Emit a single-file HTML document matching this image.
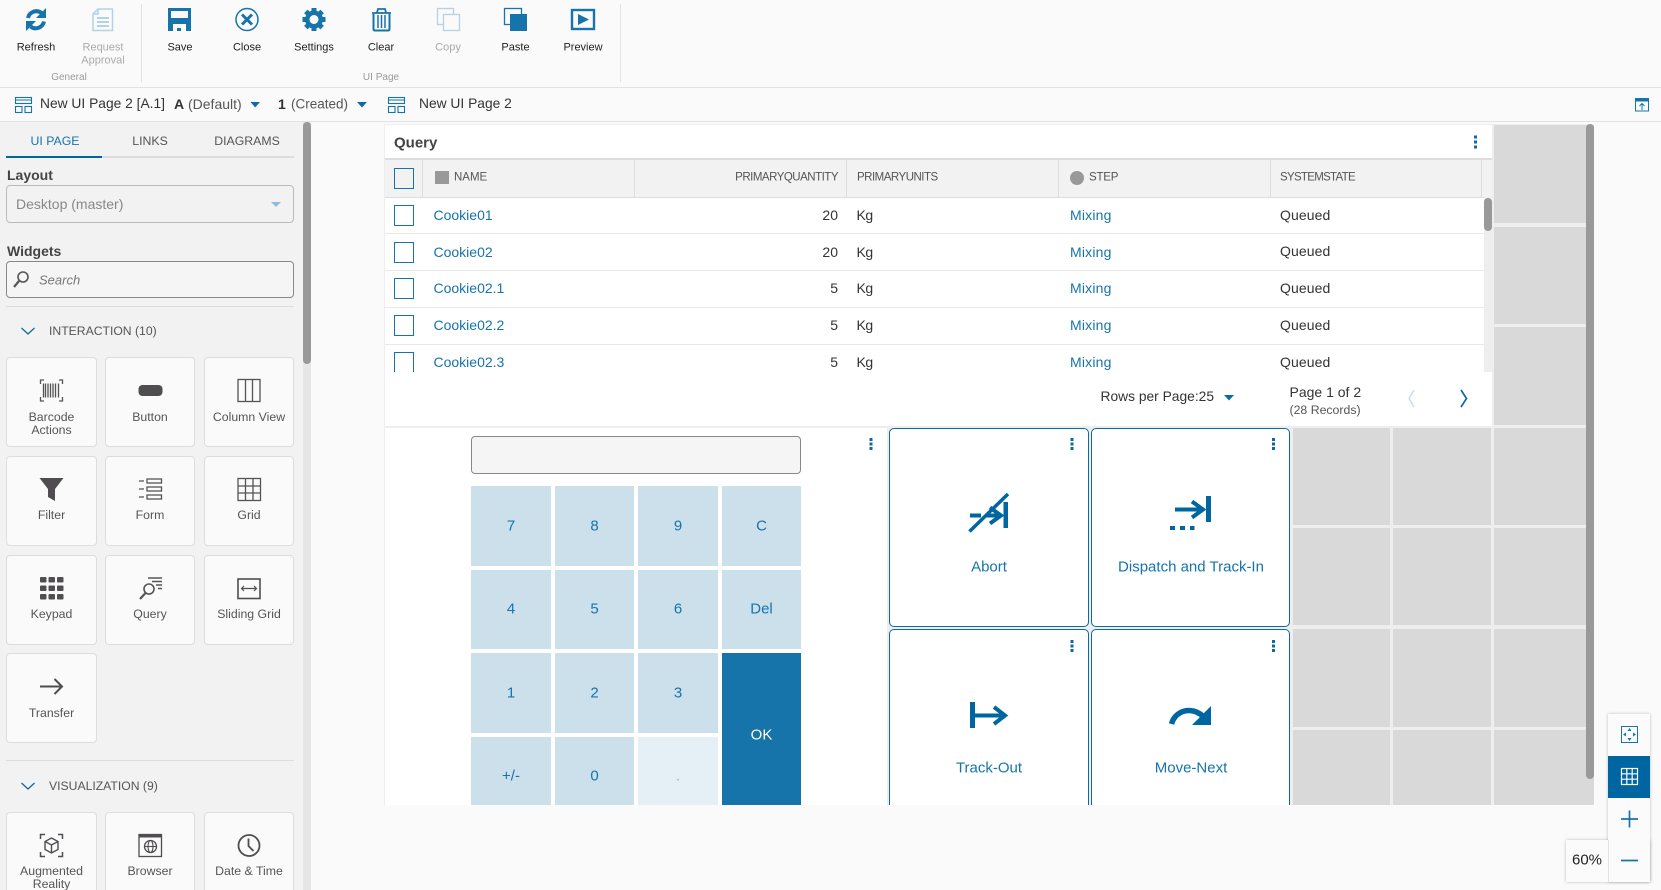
<!DOCTYPE html>
<html><head><meta charset="utf-8"><title>UI Page</title>
<style>
html,body{margin:0;padding:0;width:1661px;height:890px;overflow:hidden;background:#fafafa;font-family:"Liberation Sans",sans-serif;color:#333}
#root{position:absolute;left:0;top:0;width:1661px;height:890px;overflow:hidden;background:#fafafa}
.b{position:absolute}
.t{position:absolute;white-space:nowrap;line-height:1;transform:translateY(-50%)}
.c{position:absolute;white-space:nowrap;line-height:1;transform:translate(-50%,-50%);text-align:center}
.r{position:absolute;white-space:nowrap;line-height:1;transform:translate(-100%,-50%)}
.tb{font-size:11px;color:#222}
.dis{color:#aaa}
.sec{font-size:10px;color:#999}
.card{position:absolute;background:#fafafa;border:1px solid #ddd;border-radius:4px;box-sizing:border-box;width:91px;height:90px}
.lb{font-size:12.3px;color:#555}
.lnk{font-size:14px;color:#1674ab}
.dk{font-size:14px;color:#333}
.th{font-size:11.5px;letter-spacing:-.5px;color:#555}
.cell{position:absolute;background:#d9d9d9}
.key{position:absolute;background:#cce0eb}
.kt{font-size:15px;color:#1674ab}
.cb{position:absolute;left:394px;width:20px;height:21px;border:1.5px solid #1674ab;box-sizing:border-box;background:#fff}
.ln{position:absolute;left:385px;width:1099px;height:1px;background:#e8e8e8}
.act{position:absolute;background:#fff;border:1.3px solid #1068a0;border-radius:5px;box-sizing:border-box}
.al{font-size:15px;color:#1674ab}
.tab{font-size:12.3px}
</style></head>
<body>
<div id="root">
<!-- toolbar -->
<div class="b" style="left:0;top:87px;width:1661px;height:1px;background:#e2e2e2"></div>
<div class="b" style="left:0;top:121px;width:1661px;height:1px;background:#e2e2e2"></div>
<div class="b" style="left:141px;top:4px;width:1px;height:78px;background:#e2e2e2"></div>
<div class="b" style="left:620px;top:4px;width:1px;height:78px;background:#e2e2e2"></div>
<span class="c tb" style="left:36px;top:48px">Refresh</span>
<span class="c tb dis" style="left:103px;top:48px">Request</span>
<span class="c tb dis" style="left:103px;top:61px">Approval</span>
<span class="c sec" style="left:69px;top:77.500px">General</span>
<span class="c tb" style="left:180px;top:48px">Save</span>
<span class="c tb" style="left:247px;top:48px">Close</span>
<span class="c tb" style="left:314px;top:48px">Settings</span>
<span class="c tb" style="left:381px;top:48px">Clear</span>
<span class="c tb dis" style="left:448px;top:48px">Copy</span>
<span class="c tb" style="left:515.500px;top:48px">Paste</span>
<span class="c tb" style="left:583px;top:48px">Preview</span>
<span class="c sec" style="left:381px;top:77.500px">UI Page</span>
<!-- breadcrumb -->
<span class="t" style="left:40px;top:104px;font-size:13.8px;color:#333">New UI Page 2 [A.1]</span>
<span class="t" style="left:174px;top:104px;font-size:14px;font-weight:bold;color:#333">A</span>
<span class="t" style="left:188px;top:104px;font-size:14px;color:#555">(Default)</span>
<span class="t" style="left:278px;top:104px;font-size:14px;font-weight:bold;color:#333">1</span>
<span class="t" style="left:291px;top:104px;font-size:13.500px;color:#555">(Created)</span>
<span class="t" style="left:419px;top:104px;font-size:13.8px;color:#333">New UI Page 2</span>
<!-- sidebar -->
<div class="b" style="left:0;top:122px;width:303px;height:768px;background:#f2f2f2"></div>
<div class="b" style="left:303px;top:122px;width:8px;height:768px;background:#e6e6e6"></div>
<div class="b" style="left:303px;top:122px;width:8px;height:242px;background:#999;border-radius:4px"></div>
<span class="c tab" style="left:55px;top:141px;color:#1674ab">UI PAGE</span>
<span class="c tab" style="left:150px;top:141px;color:#555">LINKS</span>
<span class="c tab" style="left:247px;top:141px;color:#555">DIAGRAMS</span>
<div class="b" style="left:6px;top:156px;width:288px;height:2px;background:#ddd"></div>
<div class="b" style="left:6px;top:156px;width:96px;height:2px;background:#0066a2"></div>
<span class="t" style="left:7px;top:175px;font-size:14px;font-weight:bold;color:#444">Layout</span>
<div class="b" style="left:6px;top:185px;width:288px;height:38px;border:1px solid #bbb;border-radius:4px;box-sizing:border-box"></div>
<span class="t" style="left:16px;top:204px;font-size:14px;color:#888">Desktop (master)</span>
<span class="t" style="left:7px;top:251px;font-size:14px;font-weight:bold;color:#444">Widgets</span>
<div class="b" style="left:6px;top:261px;width:288px;height:37px;border:1px solid #888;border-radius:4px;box-sizing:border-box;background:#f5f5f5"></div>
<span class="t" style="left:39px;top:280px;font-size:13px;font-style:italic;color:#777">Search</span>
<div class="b" style="left:6px;top:306px;width:288px;height:1px;background:#ddd"></div>
<span class="t" style="left:49px;top:331px;font-size:12.2px;color:#555">INTERACTION (10)</span>
<div class="b" style="left:6px;top:760px;width:288px;height:1px;background:#ddd"></div>
<span class="t" style="left:49px;top:786px;font-size:12.2px;color:#555">VISUALIZATION (9)</span>

<div class="card" style="left:6px;top:357px"></div><div class="card" style="left:105px;top:357px;width:90px"></div><div class="card" style="left:204px;top:357px;width:90px"></div>
<div class="card" style="left:6px;top:456px"></div><div class="card" style="left:105px;top:456px;width:90px"></div><div class="card" style="left:204px;top:456px;width:90px"></div>
<div class="card" style="left:6px;top:555px"></div><div class="card" style="left:105px;top:555px;width:90px"></div><div class="card" style="left:204px;top:555px;width:90px"></div>
<div class="card" style="left:6px;top:653px"></div>
<div class="card" style="left:6px;top:812px;height:78px;border-bottom:0;border-radius:4px 4px 0 0"></div><div class="card" style="left:105px;top:812px;width:90px;height:78px;border-bottom:0;border-radius:4px 4px 0 0"></div><div class="card" style="left:204px;top:812px;width:90px;height:78px;border-bottom:0;border-radius:4px 4px 0 0"></div>
<span class="c lb" style="left:51.500px;top:417px">Barcode</span><span class="c lb" style="left:51.500px;top:430px">Actions</span>
<span class="c lb" style="left:150px;top:417px">Button</span>
<span class="c lb" style="left:249px;top:417px">Column View</span>
<span class="c lb" style="left:51.500px;top:515px">Filter</span>
<span class="c lb" style="left:150px;top:515px">Form</span>
<span class="c lb" style="left:249px;top:515px">Grid</span>
<span class="c lb" style="left:51.500px;top:614px">Keypad</span>
<span class="c lb" style="left:150px;top:614px">Query</span>
<span class="c lb" style="left:249px;top:614px">Sliding Grid</span>
<span class="c lb" style="left:51.500px;top:712.500px">Transfer</span>
<span class="c lb" style="left:51.500px;top:871px">Augmented</span><span class="c lb" style="left:51.500px;top:884px">Reality</span>
<span class="c lb" style="left:150px;top:871px">Browser</span>
<span class="c lb" style="left:249px;top:871px">Date &amp; Time</span>

<!-- canvas background -->
<div class="b" style="left:384px;top:124px;width:1210px;height:681px;background:#eee"></div>
<div class="cell" style="left:1494px;top:125px;width:100px;height:98px"></div>
<div class="cell" style="left:1494px;top:227px;width:100px;height:97px"></div>
<div class="cell" style="left:1494px;top:327px;width:100px;height:98px"></div>
<div class="cell" style="left:1293px;top:428px;width:97px;height:97px"></div><div class="cell" style="left:1393px;top:428px;width:98px;height:97px"></div><div class="cell" style="left:1494px;top:428px;width:100px;height:97px"></div>
<div class="cell" style="left:1293px;top:528px;width:97px;height:97px"></div><div class="cell" style="left:1393px;top:528px;width:98px;height:97px"></div><div class="cell" style="left:1494px;top:528px;width:100px;height:97px"></div>
<div class="cell" style="left:1293px;top:629px;width:97px;height:98px"></div><div class="cell" style="left:1393px;top:629px;width:98px;height:98px"></div><div class="cell" style="left:1494px;top:629px;width:100px;height:98px"></div>
<div class="cell" style="left:1293px;top:730px;width:97px;height:75px"></div><div class="cell" style="left:1393px;top:730px;width:98px;height:75px"></div><div class="cell" style="left:1494px;top:730px;width:100px;height:75px"></div>
<div class="b" style="left:1586px;top:124px;width:8px;height:655px;background:#999;border-radius:4px"></div>

<!-- query -->
<div class="b" style="left:385px;top:125px;width:1107px;height:301px;background:#fff"></div>
<span class="t" style="left:394px;top:142.500px;font-size:15px;font-weight:bold;color:#444">Query</span>
<div class="b" style="left:385px;top:158px;width:1107px;height:40px;background:#f2f2f2;border-top:2px solid #ddd;border-bottom:1px solid #ddd;box-sizing:border-box"></div>
<div class="b" style="left:422px;top:160px;width:1px;height:37px;background:#ddd"></div>
<div class="b" style="left:634px;top:160px;width:1px;height:37px;background:#ddd"></div>
<div class="b" style="left:846px;top:160px;width:1px;height:37px;background:#ddd"></div>
<div class="b" style="left:1058px;top:160px;width:1px;height:37px;background:#ddd"></div>
<div class="b" style="left:1270px;top:160px;width:1px;height:37px;background:#ddd"></div>
<div class="b" style="left:1481px;top:160px;width:1px;height:37px;background:#ddd"></div>
<div class="cb" style="top:168px;background:#f2f2f2"></div>
<div class="b" style="left:435px;top:171px;width:14px;height:13px;background:#999"></div>
<span class="t th" style="left:454px;top:177.500px;letter-spacing:0">NAME</span>
<span class="r th" style="left:838px;top:177.500px">PRIMARYQUANTITY</span>
<span class="t th" style="left:857px;top:177.500px">PRIMARYUNITS</span>
<div class="b" style="left:1070px;top:171px;width:14px;height:14px;border-radius:50%;background:#999"></div>
<span class="t th" style="left:1089px;top:177.500px;letter-spacing:-.2px">STEP</span>
<span class="t th" style="left:1280px;top:177.500px;letter-spacing:-.7px">SYSTEMSTATE</span>
<div class="ln" style="top:233px"></div><div class="ln" style="top:270px"></div><div class="ln" style="top:307px"></div><div class="ln" style="top:344px"></div>
<div class="cb" style="top:205px"></div><div class="cb" style="top:242px"></div><div class="cb" style="top:278px"></div><div class="cb" style="top:315px"></div><div class="cb" style="top:352px;height:20px;border-bottom:0"></div>
<span class="t lnk" style="left:433.500px;top:215px">Cookie01</span><span class="r dk" style="left:838px;top:215px">20</span><span class="t dk" style="left:856.500px;top:215px;letter-spacing:-.5px">Kg</span><span class="t lnk" style="left:1070px;top:215px;letter-spacing:.2px">Mixing</span><span class="t dk" style="left:1280px;top:215px;letter-spacing:.1px">Queued</span>
<span class="t lnk" style="left:433.500px;top:252px">Cookie02</span><span class="r dk" style="left:838px;top:252px">20</span><span class="t dk" style="left:856.500px;top:252px;letter-spacing:-.5px">Kg</span><span class="t lnk" style="left:1070px;top:252px;letter-spacing:.2px">Mixing</span><span class="t dk" style="left:1280px;top:251px;letter-spacing:.1px">Queued</span>
<span class="t lnk" style="left:433.500px;top:288px">Cookie02.1</span><span class="r dk" style="left:838px;top:288px">5</span><span class="t dk" style="left:856.500px;top:288px;letter-spacing:-.5px">Kg</span><span class="t lnk" style="left:1070px;top:288px;letter-spacing:.2px">Mixing</span><span class="t dk" style="left:1280px;top:288px;letter-spacing:.1px">Queued</span>
<span class="t lnk" style="left:433.500px;top:325px">Cookie02.2</span><span class="r dk" style="left:838px;top:325px">5</span><span class="t dk" style="left:856.500px;top:325px;letter-spacing:-.5px">Kg</span><span class="t lnk" style="left:1070px;top:325px;letter-spacing:.2px">Mixing</span><span class="t dk" style="left:1280px;top:325px;letter-spacing:.1px">Queued</span>
<span class="t lnk" style="left:433.500px;top:362px">Cookie02.3</span><span class="r dk" style="left:838px;top:362px">5</span><span class="t dk" style="left:856.500px;top:362px;letter-spacing:-.5px">Kg</span><span class="t lnk" style="left:1070px;top:362px;letter-spacing:.2px">Mixing</span><span class="t dk" style="left:1280px;top:362px;letter-spacing:.1px">Queued</span>
<div class="b" style="left:1484px;top:197px;width:8px;height:175px;background:#eee"></div>
<div class="b" style="left:1484px;top:198px;width:8px;height:33px;background:#999;border-radius:4px"></div>
<span class="t" style="left:1100.500px;top:397px;font-size:13.800px;color:#333">Rows per Page:25</span>
<span class="t" style="left:1289.500px;top:392px;font-size:14px;color:#333">Page 1 of 2</span>
<span class="t" style="left:1289.500px;top:410px;font-size:12.300px;color:#555">(28 Records)</span>

<!-- keypad -->
<div class="b" style="left:385px;top:428px;width:502px;height:377px;background:#fff"></div>
<div class="b" style="left:471px;top:436px;width:330px;height:38px;background:#f5f5f5;border:1px solid #888;border-radius:4px;box-sizing:border-box"></div>
<div class="key" style="left:471px;top:486px;width:80px;height:80px"></div><div class="key" style="left:555px;top:486px;width:79px;height:80px"></div><div class="key" style="left:638px;top:486px;width:80px;height:80px"></div><div class="key" style="left:722px;top:486px;width:79px;height:80px"></div>
<div class="key" style="left:471px;top:570px;width:80px;height:79px"></div><div class="key" style="left:555px;top:570px;width:79px;height:79px"></div><div class="key" style="left:638px;top:570px;width:80px;height:79px"></div><div class="key" style="left:722px;top:570px;width:79px;height:79px"></div>
<div class="key" style="left:471px;top:653px;width:80px;height:80px"></div><div class="key" style="left:555px;top:653px;width:79px;height:80px"></div><div class="key" style="left:638px;top:653px;width:80px;height:80px"></div>
<div class="key" style="left:722px;top:653px;width:79px;height:152px;background:#1674ab"></div>
<div class="key" style="left:471px;top:737px;width:80px;height:68px"></div><div class="key" style="left:555px;top:737px;width:79px;height:68px"></div><div class="key" style="left:638px;top:737px;width:80px;height:68px;background:#e5f0f6"></div>
<span class="c kt" style="left:511px;top:526px">7</span><span class="c kt" style="left:594.500px;top:526px">8</span><span class="c kt" style="left:678px;top:526px">9</span><span class="c kt" style="left:761.500px;top:526px">C</span>
<span class="c kt" style="left:511px;top:609px">4</span><span class="c kt" style="left:594.500px;top:609px">5</span><span class="c kt" style="left:678px;top:609px">6</span><span class="c kt" style="left:761.500px;top:609px">Del</span>
<span class="c kt" style="left:511px;top:693px">1</span><span class="c kt" style="left:594.500px;top:693px">2</span><span class="c kt" style="left:678px;top:693px">3</span>
<span class="c kt" style="left:761.500px;top:735px;color:#fff">OK</span>
<span class="c kt" style="left:511px;top:776px">+/-</span><span class="c kt" style="left:594.500px;top:776px">0</span><span class="c kt" style="left:678px;top:776px;color:#aaa">.</span>

<!-- action cards -->
<div class="b" style="left:889px;top:428px;width:401px;height:377px;overflow:hidden">
  <div class="act" style="left:0;top:0;width:200px;height:199px"></div>
  <div class="act" style="left:202px;top:0;width:199px;height:199px"></div>
  <div class="act" style="left:0;top:201px;width:200px;height:199px"></div>
  <div class="act" style="left:202px;top:201px;width:199px;height:199px"></div>
</div>
<span class="c al" style="left:989px;top:567px">Abort</span>
<span class="c al" style="left:1191px;top:567px">Dispatch and Track-In</span>
<span class="c al" style="left:989px;top:768px">Track-Out</span>
<span class="c al" style="left:1191px;top:768px">Move-Next</span>

<!-- zoom controls -->
<div class="b" style="left:1608px;top:714px;width:42px;height:168px;background:#fbfbfb;box-shadow:0 0 3px rgba(0,0,0,.25)"></div>
<div class="b" style="left:1566px;top:840px;width:84px;height:42px;background:#fbfbfb;box-shadow:0 0 3px rgba(0,0,0,.25)"></div>
<div class="b" style="left:1608px;top:714px;width:42px;height:42px;background:#fbfbfb"></div>
<div class="b" style="left:1608px;top:756px;width:42px;height:42px;background:#0066a2"></div>
<div class="b" style="left:1608px;top:798px;width:42px;height:42px;background:#fbfbfb"></div>
<div class="b" style="left:1608px;top:840px;width:1px;height:42px;background:#e2e2e2"></div>
<span class="c" style="left:1587px;top:860px;font-size:15px;color:#222">60%</span>

<!-- icons -->
<svg class="b" style="left:0;top:0" width="1661" height="890" viewBox="0 0 1661 890" fill="none">
  <!-- refresh -->
  <g stroke="#1674ab" stroke-width="4" fill="none">
    <path d="M28 18 A8.500 8.500 0 0 1 41.500 13"/><path d="M44 21.500 A8.500 8.500 0 0 1 30.500 26.500"/>
  </g>
  <path d="M46 8 V18 H36Z M26 31 V21 H36Z" fill="#1674ab"/>
  <!-- request approval -->
  <path d="M98 9 H112.500 V30.500 H93 V14Z M98 9 V14 H93" stroke="#b4d2e4" stroke-width="1.500" fill="none"/>
  <path d="M97 18 H109 M97 22 H109 M97 26 H109" stroke="#b4d2e4" stroke-width="2"/>
  <!-- save -->
  <path d="M168 8 H191 V31 H186 V24 H173 V31 H168Z" fill="#1674ab"/>
  <rect x="171" y="11" width="17" height="7" fill="#fafafa"/>
  <rect x="177" y="28" width="4" height="3" fill="#1674ab"/>
  <!-- close -->
  <circle cx="247" cy="19.500" r="11" stroke="#1674ab" stroke-width="1.500"/>
  <path d="M242 14.500 L252 24.500 M252 14.500 L242 24.500" stroke="#1674ab" stroke-width="3"/>
  <!-- gear -->
  <g fill="#1674ab">
    <rect x="311.500" y="8" width="5" height="23"/>
    <rect x="311.500" y="8" width="5" height="23" transform="rotate(45 314 19.500)"/>
    <rect x="311.500" y="8" width="5" height="23" transform="rotate(90 314 19.500)"/>
    <rect x="311.500" y="8" width="5" height="23" transform="rotate(135 314 19.500)"/>
    <circle cx="314" cy="19.500" r="9"/>
  </g>
  <circle cx="314" cy="19.500" r="4.500" fill="#fafafa"/>
  <!-- trash -->
  <path d="M372 13 H391 M377 12.500 L378 9 H385 L386 12.500" stroke="#1674ab" stroke-width="1.800"/>
  <path d="M373.500 14 V29 Q373.500 30.500 375 30.500 H388 Q389.500 30.500 389.500 29 V14" stroke="#1674ab" stroke-width="2"/>
  <path d="M378 15 V28 M381.500 15 V28 M385 15 V28" stroke="#1674ab" stroke-width="1.500"/>
  <!-- copy -->
  <rect x="437.500" y="8.500" width="16" height="16" stroke="#b4d2e4" stroke-width="1.300" fill="#fafafa"/>
  <rect x="443.500" y="14.500" width="16" height="16" stroke="#b4d2e4" stroke-width="1.300" fill="#fafafa"/>
  <!-- paste -->
  <rect x="504.500" y="8.500" width="17" height="16" stroke="#1674ab" stroke-width="1.300" fill="#fafafa"/>
  <rect x="510" y="14" width="17" height="17" fill="#1674ab"/>
  <!-- preview -->
  <rect x="572" y="10" width="22" height="19" stroke="#1674ab" stroke-width="2.400" fill="#fafafa"/>
  <path d="M578 14 L589 19.500 L578 25Z" fill="#1674ab"/>

  <!-- layout icons -->
  <g stroke="#1674ab" stroke-width="1.100">
    <rect x="15.500" y="97.500" width="16" height="6"/><path d="M15 100 H32"/><rect x="15.500" y="106.500" width="6.500" height="6"/><rect x="25" y="106.500" width="6.500" height="6"/>
    <rect x="388.500" y="97.500" width="16" height="6"/><path d="M388 100 H405"/><rect x="388.500" y="106.500" width="6.500" height="6"/><rect x="398" y="106.500" width="6.500" height="6"/>
  </g>
  <path d="M250.500 102 H260 L255.200 107.500Z M357 102 H367 L362 107.500Z" fill="#0f6aa3"/>
  <!-- top right -->
  <rect x="1635.500" y="98.500" width="13" height="12.500" stroke="#1674ab"/><rect x="1635" y="98" width="14" height="3.500" fill="#1674ab"/>
  <path d="M1642 110 V103.500 M1639.500 106 L1642 103.500 L1644.500 106" stroke="#1674ab"/>

  <!-- sidebar chrome -->
  <path d="M271 202 H281 L276 207Z" fill="#8ebcdb"/>
  <circle cx="23" cy="277" r="5" stroke="#555" stroke-width="1.600"/><path d="M19 281 L14 287" stroke="#555" stroke-width="2.200"/>
  <path d="M21.500 328 L28 334 L34.500 328 M21.500 783 L28 789 L34.500 783" stroke="#1068a0" stroke-width="1.300"/>
  <!-- barcode -->
  <g stroke="#555" stroke-width="1.300">
    <path d="M44 380 H40.500 V384 M59 380 H62.500 V384 M44 401 H40.500 V397 M59 401 H62.500 V397"/>
    <path d="M43.500 383.500 V397.500 M45.500 383.500 V397.500 M48 383.500 V397.500 M50.500 383.500 V397.500 M53 383.500 V397.500 M55.500 383.500 V397.500 M58.500 383.500 V397.500" stroke-width="1.300"/>
  </g>
  <!-- button -->
  <rect x="138.500" y="385" width="24" height="11" rx="4" fill="#4f4d50"/>
  <!-- column view -->
  <rect x="238" y="379.500" width="22" height="22" stroke="#555" stroke-width="1.300"/><path d="M245.500 379 V402 M252.500 379 V402" stroke="#555" stroke-width="1.300"/>
  <!-- filter -->
  <path d="M39.500 478 H63.500 L55 489 V501 L48 497 V489Z" fill="#4f4d50"/>
  <!-- form -->
  <g stroke="#555" stroke-width="1.300"><path d="M139 481 H144 M139 489 H144 M139 497 H144"/><rect x="147" y="479" width="14.500" height="4"/><rect x="147" y="487" width="14.500" height="4"/><rect x="147" y="495" width="14.500" height="4"/></g>
  <!-- grid -->
  <rect x="238" y="478.500" width="22.500" height="22" stroke="#555" stroke-width="1.300"/><path d="M245.500 478 V501 M253 478 V501 M238 486 H260 M238 493 H260" stroke="#555" stroke-width="1.300"/>
  <!-- keypad -->
  <g fill="#4f4d50">
    <rect x="40" y="577" width="6.500" height="5.500" rx="1"/><rect x="48.500" y="577" width="6.500" height="5.500" rx="1"/><rect x="57" y="577" width="6.500" height="5.500" rx="1"/>
    <rect x="40" y="585.500" width="6.500" height="5.500" rx="1"/><rect x="48.500" y="585.500" width="6.500" height="5.500" rx="1"/><rect x="57" y="585.500" width="6.500" height="5.500" rx="1"/>
    <rect x="40" y="594" width="6.500" height="5.500" rx="1"/><rect x="48.500" y="594" width="6.500" height="5.500" rx="1"/><rect x="57" y="594" width="6.500" height="5.500" rx="1"/>
  </g>
  <!-- query -->
  <circle cx="149" cy="589" r="5" stroke="#555" stroke-width="1.600"/><path d="M145.500 593 L140 599" stroke="#555" stroke-width="2.200"/>
  <path d="M148 578 H162 M152 581.500 H162 M156 585 H162 M158 588.500 H162" stroke="#555" stroke-width="1.400"/>
  <!-- sliding grid -->
  <rect x="238" y="579" width="22" height="19.500" stroke="#4f4d50" stroke-width="1.600"/>
  <path d="M241.500 588.500 H256.500 M244 586 L241.500 588.500 L244 591 M254 586 L256.500 588.500 L254 591" stroke="#4f4d50" stroke-width="1.200"/>
  <!-- transfer -->
  <path d="M40 686.500 H62 M54.500 679 L62 686.500 L54.500 694" stroke="#4f4d50" stroke-width="2"/>
  <!-- AR -->
  <path d="M40.500 839 V834.500 H45 M58 834.500 H62.500 V839 M40.500 852 V856.500 H45 M58 856.500 H62.500 V852" stroke="#4f4d50" stroke-width="1.500"/>
  <path d="M51.500 838 L58 841.500 V849.500 L51.500 853 L45 849.500 V841.500Z M45 841.500 L51.500 845 L58 841.500 M51.500 845 V853" stroke="#4f4d50" stroke-width="1.400"/>
  <!-- browser -->
  <rect x="139" y="834.500" width="22.500" height="22" stroke="#4f4d50" stroke-width="1.300"/><rect x="139" y="834" width="23" height="3.500" fill="#4f4d50"/>
  <circle cx="150.500" cy="846.500" r="6" stroke="#4f4d50" stroke-width="1.300"/><ellipse cx="150.500" cy="846.500" rx="2.500" ry="6" stroke="#4f4d50" stroke-width="1.100"/><path d="M144.500 846.500 H156.500" stroke="#4f4d50" stroke-width="1.100"/>
  <!-- clock -->
  <circle cx="249" cy="845.500" r="10.500" stroke="#4f4d50" stroke-width="1.800"/><path d="M248.500 838.500 V846 L253.500 851" stroke="#4f4d50" stroke-width="1.800"/>

  <!-- kebabs -->
  <g fill="#1068a0">
    <rect x="1474" y="135.500" width="3" height="3"/><rect x="1474" y="140.500" width="3" height="3"/><rect x="1474" y="145.500" width="3" height="3"/>
    <rect x="869.500" y="438" width="3" height="3"/><rect x="869.500" y="442.500" width="3" height="3"/><rect x="869.500" y="447" width="3" height="3"/>
    <rect x="1070.500" y="438" width="3" height="3"/><rect x="1070.500" y="442.500" width="3" height="3"/><rect x="1070.500" y="447" width="3" height="3"/>
    <rect x="1272" y="438" width="3" height="3"/><rect x="1272" y="442.500" width="3" height="3"/><rect x="1272" y="447" width="3" height="3"/>
    <rect x="1070.500" y="640" width="3" height="3"/><rect x="1070.500" y="644.500" width="3" height="3"/><rect x="1070.500" y="649" width="3" height="3"/>
    <rect x="1272" y="640" width="3" height="3"/><rect x="1272" y="644.500" width="3" height="3"/><rect x="1272" y="649" width="3" height="3"/>
  </g>
  <!-- pager -->
  <path d="M1224 395 H1234 L1229 400.500Z" fill="#0f6aa3"/>
  <path d="M1414 390 L1409 398.500 L1414 407" stroke="#c7deec" stroke-width="1.500"/>
  <path d="M1461 390 L1466.500 398.500 L1461 407" stroke="#1068a0" stroke-width="1.700"/>

  <!-- abort -->
  <rect x="1003.500" y="502" width="4.500" height="26" fill="#0066a2"/>
  <path d="M970 515.500 H981 M986 515.500 H1001 M990 507.500 L1001 515.500 L990 523.500" stroke="#0066a2" stroke-width="4"/>
  <path d="M969.500 531.500 L1008 494" stroke="#0066a2" stroke-width="3.500"/>
  <!-- dispatch -->
  <rect x="1206" y="496" width="5" height="26" fill="#0066a2"/>
  <path d="M1175 509.500 H1203 M1192 501.500 L1203 509.500 L1192 517.500" stroke="#0066a2" stroke-width="4"/>
  <rect x="1170" y="526" width="5" height="4" fill="#0066a2"/><rect x="1180" y="526" width="5" height="4" fill="#0066a2"/><rect x="1190" y="526" width="4.500" height="4" fill="#0066a2"/>
  <!-- track-out -->
  <rect x="970" y="702" width="5" height="26" fill="#0066a2"/>
  <path d="M975 715.500 H1004 M994 707 L1005 715.500 L994 724" stroke="#0066a2" stroke-width="4"/>
  <!-- move-next -->
  <path d="M1171.500 724 C1175 711 1191 705 1204 717" stroke="#0066a2" stroke-width="5.500"/>
  <path d="M1211 706 V725 H1192Z" fill="#0066a2"/>

  <!-- zoom icons -->
  <rect x="1621.500" y="726.500" width="16" height="16" stroke="#1674ab" stroke-width="1"/>
  <path d="M1629.500 728 L1627.500 731 H1631.500Z M1629.500 741 L1627.500 738 H1631.500Z M1623 734.500 L1626 732.500 V736.500Z M1636 734.500 L1633 732.500 V736.500Z" fill="#1674ab"/>
  <rect x="1621.500" y="768.500" width="16" height="16" stroke="#fff" stroke-width="1.200"/>
  <path d="M1626.800 768 V785 M1632.200 768 V785 M1621 773.800 H1638 M1621 779.200 H1638" stroke="#fff" stroke-width="1.200"/>
  <path d="M1621 819 H1638 M1629.500 810.500 V827.500" stroke="#1674ab" stroke-width="1.700"/>
  <path d="M1621 860.500 H1638" stroke="#1674ab" stroke-width="1.700"/>
</svg>
</div>
</body></html>
